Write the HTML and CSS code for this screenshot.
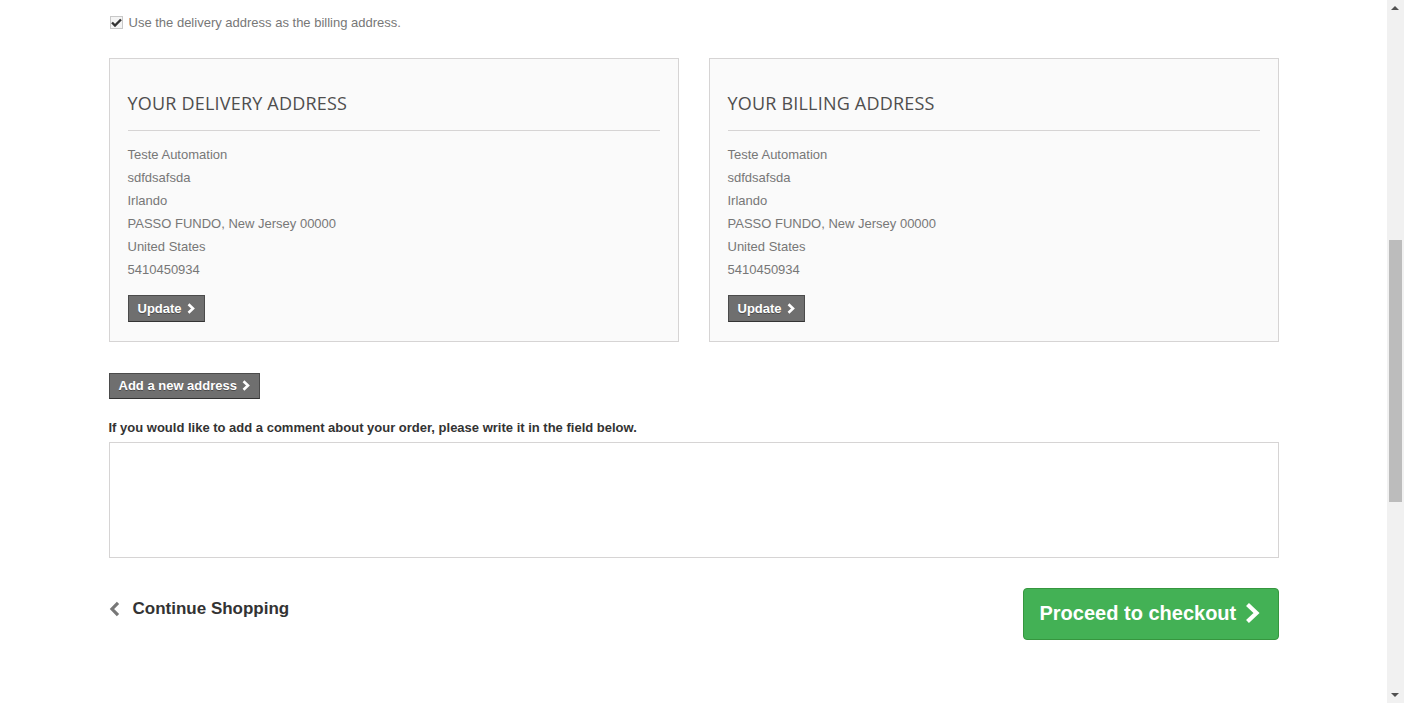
FILE: index.html
```html
<!DOCTYPE html>
<html>
<head>
<meta charset="utf-8">
<link rel="stylesheet" href="styles.css">
</head>
<body>
<div class="page">
  <main class="viewport">
    <div class="container">
      <label class="billing-check">
        <span class="checkbox">
          <svg width="11" height="9" viewBox="0 0 11 9"><path d="M1 4.5 L4 7.5 L10 1.5" fill="none" stroke="#333" stroke-width="2.4"/></svg>
        </span>
        <span>Use the delivery address as the billing address.</span>
      </label>

      <div class="addresses">
        <section class="address-box">
          <h3 class="address-title">Your delivery address</h3>
          <ul class="address-lines">
            <li>Teste Automation</li>
            <li>sdfdsafsda</li>
            <li>Irlando</li>
            <li>PASSO FUNDO, New Jersey 00000</li>
            <li>United States</li>
            <li>5410450934</li>
          </ul>
          <a class="btn-small">Update <svg class="chev" width="8" height="11" viewBox="0 0 8 11"><path d="M1.5 1.2 L6 5.5 L1.5 9.8" fill="none" stroke="#fff" stroke-width="2.6"/></svg></a>
        </section>
        <section class="address-box">
          <h3 class="address-title">Your billing address</h3>
          <ul class="address-lines">
            <li>Teste Automation</li>
            <li>sdfdsafsda</li>
            <li>Irlando</li>
            <li>PASSO FUNDO, New Jersey 00000</li>
            <li>United States</li>
            <li>5410450934</li>
          </ul>
          <a class="btn-small">Update <svg class="chev" width="8" height="11" viewBox="0 0 8 11"><path d="M1.5 1.2 L6 5.5 L1.5 9.8" fill="none" stroke="#fff" stroke-width="2.6"/></svg></a>
        </section>
      </div>

      <a class="btn-small add-address">Add a new address <svg class="chev" width="8" height="11" viewBox="0 0 8 11"><path d="M1.5 1.2 L6 5.5 L1.5 9.8" fill="none" stroke="#fff" stroke-width="2.6"/></svg></a>

      <p class="comment-label">If you would like to add a comment about your order, please write it in the field below.</p>
      <textarea class="comment"></textarea>

      <div class="actions">
        <a class="continue">
          <svg width="11" height="16" viewBox="0 0 11 16"><path d="M9 1.8 L3 8 L9 14.2" fill="none" stroke="#777" stroke-width="3.2"/></svg>
          <span>Continue Shopping</span>
        </a>
        <a class="proceed">Proceed to checkout <svg width="17" height="22" viewBox="0 0 17 22"><path d="M3.5 2.5 L12.5 11 L3.5 19.5" fill="none" stroke="#fff" stroke-width="4.2"/></svg></a>
      </div>
    </div>
  </main>
  <div class="scrollbar">
    <div class="arrow up"></div>
    <div class="track"><div class="thumb"></div></div>
    <div class="arrow down"></div>
  </div>
</div>
</body>
</html>
```

FILE: styles.css
```css
html, body {
  margin: 0;
  padding: 0;
  height: 100%;
  overflow: hidden;
  background: #fff;
  font-family: Arial, "Liberation Sans", sans-serif;
  font-size: 13px;
  color: #777;
}

.page {
  display: flex;
  height: 703px;
}

.viewport {
  flex: 1;
  min-width: 0;
}

.container {
  width: 1170px;
  margin: 0 auto;
  padding-left: 1px;
  box-sizing: border-box;
  display: flex;
  flex-direction: column;
}

.billing-check {
  display: flex;
  align-items: center;
  gap: 6px;
  margin-top: 15px;
  height: 15px;
  color: #777;
  font-size: 13px;
}

.checkbox {
  width: 13px;
  height: 13px;
  box-sizing: border-box;
  border: 1px solid #c8c8c8;
  background: #f4f4f4;
  display: flex;
  align-items: center;
  justify-content: center;
}

.addresses {
  display: flex;
  gap: 30px;
  margin-top: 28px;
  margin-left: -1px;
}

.address-box {
  flex: 1;
  height: 284px;
  box-sizing: border-box;
  background: #fafafa;
  border: 1px solid #d6d4d4;
  padding: 0 18px;
}

.address-title {
  margin: 33px 0 0;
  padding-bottom: 16px;
  border-bottom: 1px solid #d6d4d4;
  font-family: "Open Sans", sans-serif;
  font-weight: 500;
  font-size: 18px;
  line-height: 22px;
  letter-spacing: 0.2px;
  text-transform: uppercase;
  color: #4f4e4e;
}

.address-lines {
  list-style: none;
  margin: 12px 0 0;
  padding: 0;
}

.address-lines li {
  line-height: 23px;
  height: 23px;
}

.btn-small {
  display: inline-flex;
  align-items: center;
  gap: 5px;
  align-self: flex-start;
  box-sizing: border-box;
  height: 27px;
  padding: 0 9px;
  background: #6f6f6f;
  border: 1px solid #4b4b4b;
  border-bottom-color: #333;
  color: #fff;
  font-weight: bold;
  font-size: 13px;
  text-shadow: 0 1px #4a4a4a;
  margin-top: 14px;
}

.add-address {
  margin-top: 31px;
  margin-left: -1px;
  height: 26px;
  padding-bottom: 1px;
}

.comment-label {
  margin: 21px 0 0 -1px;
  color: #333;
  font-weight: bold;
  font-size: 13px;
  line-height: 16px;
}

.comment {
  margin: 6px 0 0 -1px;
  height: 116px;
  width: 1170px;
  box-sizing: border-box;
  border: 1px solid #d6d4d4;
  resize: none;
  background: #fff;
}

.actions {
  display: flex;
  justify-content: space-between;
  align-items: flex-start;
  margin-top: 30px;
  margin-left: -1px;
}

.continue {
  display: flex;
  align-items: center;
  gap: 13px;
  margin-top: 11px;
  color: #333;
  font-weight: bold;
  font-size: 17px;
}

.proceed {
  display: flex;
  align-items: center;
  gap: 8px;
  box-sizing: border-box;
  height: 52px;
  width: 256px;
  padding-left: 16px;
  padding-bottom: 2px;
  background: #43b155;
  border: 1px solid #36963f;
  border-radius: 4px;
  color: #fff;
  font-weight: bold;
  font-size: 20px;
}

.scrollbar {
  width: 17px;
  background: #f1f1f1;
  display: flex;
  flex-direction: column;
}

.arrow {
  height: 17px;
  position: relative;
}

.arrow.up::after, .arrow.down::after {
  content: "";
  position: absolute;
  left: 4px;
  border-left: 4px solid transparent;
  border-right: 4px solid transparent;
}

.arrow.up::after {
  top: 6px;
  border-bottom: 4px solid #505050;
}

.arrow.down::after {
  top: 7px;
  border-top: 4px solid #505050;
}

.track {
  flex: 1;
  padding: 223px 2px 0;
}

.thumb {
  height: 262px;
  background: #bcbcbc;
}
```
